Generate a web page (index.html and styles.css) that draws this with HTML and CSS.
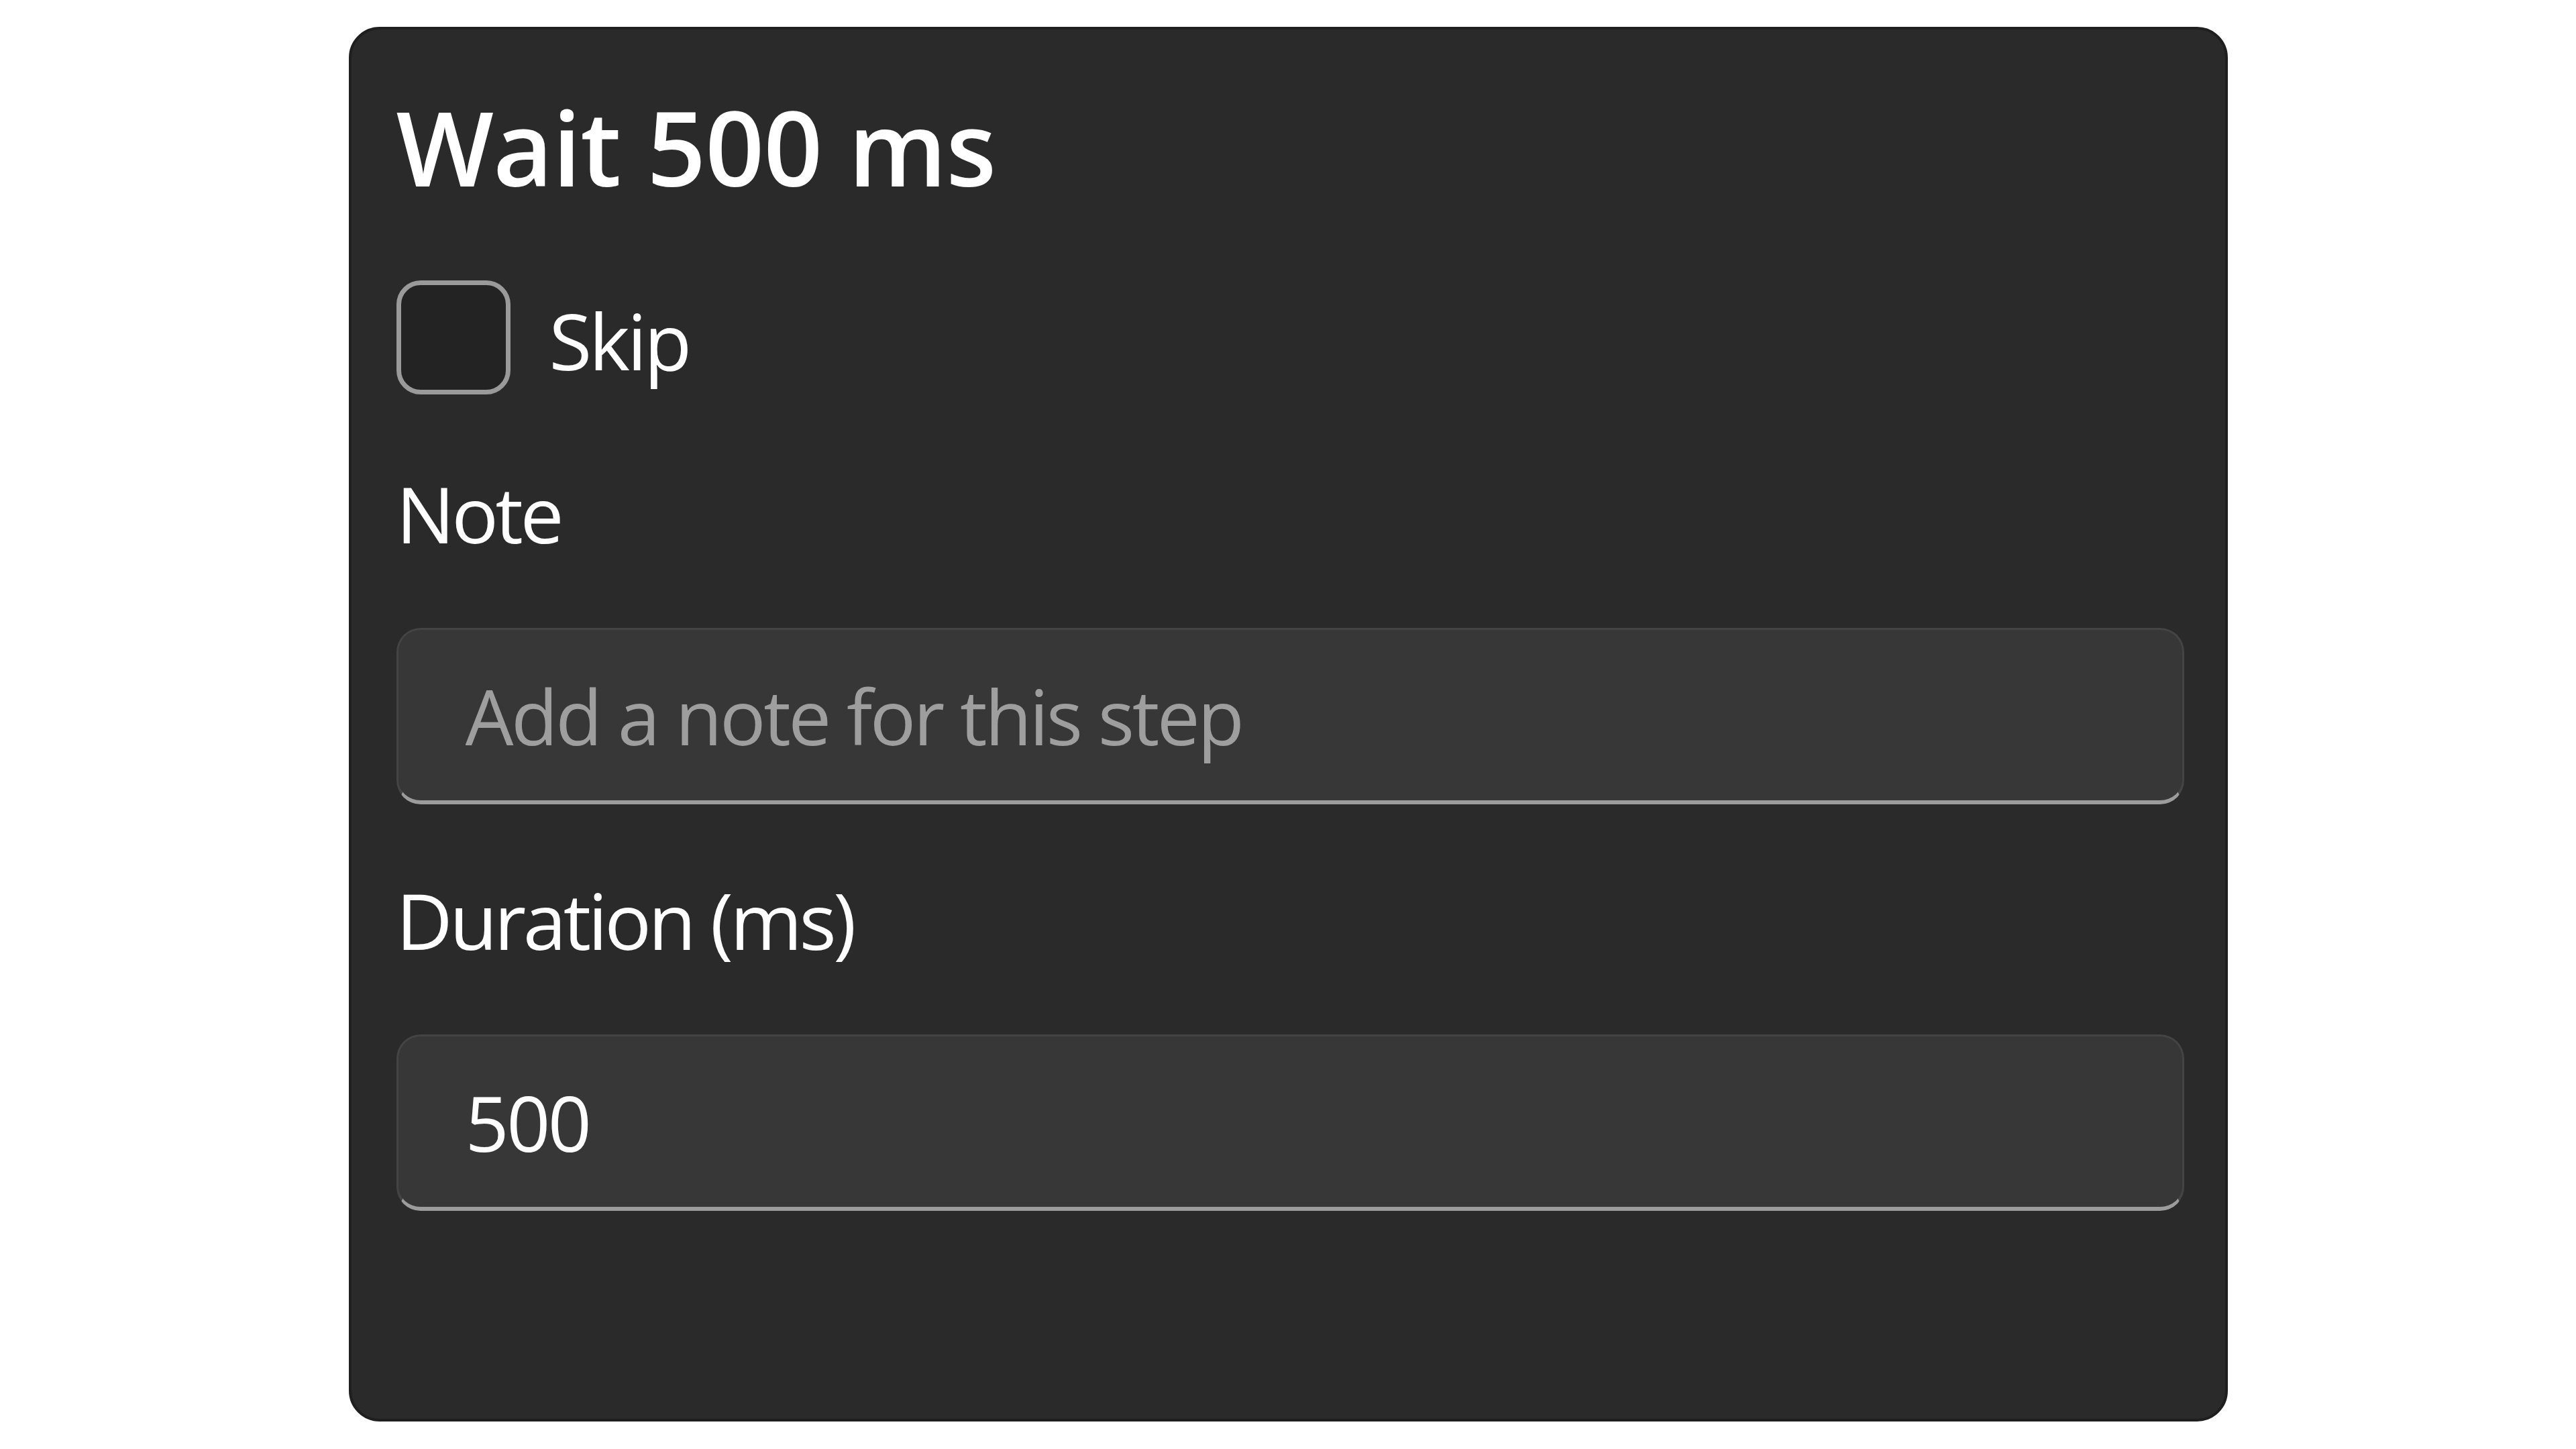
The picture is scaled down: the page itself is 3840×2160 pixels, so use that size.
FILE: index.html
```html
<!DOCTYPE html>
<html lang="en">
<head>
<meta charset="utf-8">
<title>Wait 500 ms</title>
<link rel="stylesheet" href="styles.css">
</head>
<body>
<section class="card">
  <h1 class="title">Wait 500 ms</h1>
  <label class="check-row">
    <span class="checkbox"></span>
    <span class="check-label">Skip</span>
  </label>
  <div class="field">
    <div class="field-label">Note</div>
    <input class="text-input" type="text" placeholder="Add a note for this step">
  </div>
  <div class="field">
    <div class="field-label">Duration (ms)</div>
    <input class="text-input" type="text" value="500">
  </div>
</section>
</body>
</html>
```

FILE: styles.css
```css
html, body {
  margin: 0;
  padding: 0;
  background: #ffffff;
}

body {
  font-family: "Open Sans", "Noto Sans", sans-serif;
  color: #ffffff;
  padding-top: 40px;
}

.card {
  box-sizing: border-box;
  width: 2801px;
  height: 2079px;
  margin: 0 auto;
  background: #2a2a2a;
  border: 4px solid #1f1f1f;
  border-radius: 46px;
  padding: 74px 61px 0 67px;
  display: flex;
  flex-direction: column;
}

.title {
  margin: 0;
  font-size: 154px;
  font-weight: 600;
  line-height: 200px;
  letter-spacing: -1px;
  color: #ffffff;
}

.check-row {
  margin-top: 100px;
  display: flex;
  align-items: center;
  gap: 58px;
  height: 170px;
}

.checkbox {
  box-sizing: border-box;
  width: 170px;
  height: 170px;
  border: 7px solid #9a9a9a;
  border-radius: 36px;
  background: #232323;
  flex: none;
}

.check-label {
  font-size: 116px;
  line-height: 160px;
  letter-spacing: -4px;
  padding-top: 8px;
}

.field {
  display: flex;
  flex-direction: column;
  margin-top: 97px;
}

.field + .field {
  margin-top: 92px;
}

.field-label {
  font-size: 116px;
  line-height: 160px;
  letter-spacing: -4.5px;
  margin-bottom: 91px;
}

.text-input {
  box-sizing: border-box;
  width: 100%;
  height: 263px;
  margin: 0;
  padding: 0 100px;
  background: #373737;
  border: 3px solid #444444;
  border-bottom: 6px solid #9c9c9c;
  border-radius: 36px;
  font-family: "Open Sans", "Noto Sans", sans-serif;
  font-size: 114px;
  letter-spacing: -3.5px;
  color: #ffffff;
  outline: none;
}

.text-input::placeholder {
  color: #9e9e9e;
  opacity: 1;
}
```
